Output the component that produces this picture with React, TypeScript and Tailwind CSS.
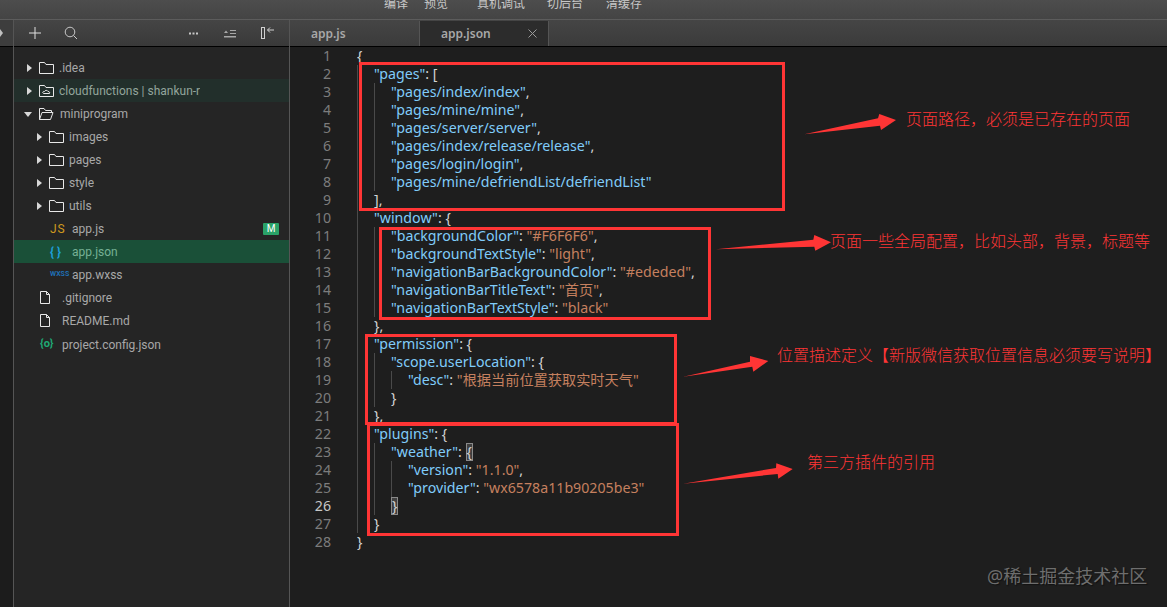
import React from "react";

type T = [string, string];
const K = "text-[#80ccfa]";
const P = "text-[#d4d4d4]";
const S = "text-[#c5805f]";
const lines: [number, T[]][] = [
  [0, [["{", P]]],
  [1, [['"pages"', K], [": [", P]]],
  [2, [['"pages/index/index"', K], [",", P]]],
  [2, [['"pages/mine/mine"', K], [",", P]]],
  [2, [['"pages/server/server"', K], [",", P]]],
  [2, [['"pages/index/release/release"', K], [",", P]]],
  [2, [['"pages/login/login"', K], [",", P]]],
  [2, [['"pages/mine/defriendList/defriendList"', K]]],
  [1, [["],", P]]],
  [1, [['"window"', K], [": {", P]]],
  [2, [['"backgroundColor"', K], [": ", P], ['"#F6F6F6"', S], [",", P]]],
  [2, [['"backgroundTextStyle"', K], [": ", P], ['"light"', S], [",", P]]],
  [2, [['"navigationBarBackgroundColor"', K], [": ", P], ['"#ededed"', S], [",", P]]],
  [2, [['"navigationBarTitleText"', K], [": ", P], ['"首页"', S], [",", P]]],
  [2, [['"navigationBarTextStyle"', K], [": ", P], ['"black"', S]]],
  [1, [["},", P]]],
  [1, [['"permission"', K], [": {", P]]],
  [2, [['"scope.userLocation"', K], [": {", P]]],
  [3, [['"desc"', K], [": ", P], ['"根据当前位置获取实时天气"', S]]],
  [2, [["}", P]]],
  [1, [["},", P]]],
  [1, [['"plugins"', K], [": {", P]]],
  [2, [['"weather"', K], [": ", P], ["{", "B"]]],
  [3, [['"version"', K], [": ", P], ['"1.1.0"', S], [",", P]]],
  [3, [['"provider"', K], [": ", P], ['"wx6578a11b90205be3"', S]]],
  [2, [["}", "B"]]],
  [1, [["}", P]]],
  [0, [["}", P]]],
];

const Folder = ({ open, cloud }: { open?: boolean; cloud?: boolean }) => (
  <svg width="15" height="12" viewBox="0 0 15 12" fill="none" stroke="#e8e8e8" strokeWidth="1">
    {open ? (
      <path d="M.5 11.5V.5h4.5l1.5 2h6v2M.5 11.5l2.5-7h11l-2.5 7z" />
    ) : (
      <path d="M.5 11.5V.5h5l1.5 2h7.5v9z" />
    )}
    {cloud && <path d="M4.5 8.5h6M4.5 8.5c-1.5-1 -.5-2.500 1-2 .5-1.500 3-1.500 3.500 0 1.500-.2 2 1.200 1.500 2" />}
  </svg>
);
const FileIcon = () => (
  <svg width="10" height="13" viewBox="0 0 10 13" fill="none" stroke="#e8e8e8" strokeWidth="1">
    <path d="M.5.5h6l3 3v9h-9zM6.500.5v3h3" />
  </svg>
);
const Caret = ({ open }: { open?: boolean }) => (
  <svg width="8" height="8" viewBox="0 0 8 8" fill="#d8d8d8">
    {open ? <path d="M0 2h8L4 7z" /> : <path d="M2 0l5 4-5 4z" />}
  </svg>
);

type Row = { label: string; pl: number; kind: string; bg?: string; tc?: string; badge?: boolean; extra?: string };
const rows: Row[] = [
  { label: ".idea", pl: 11, kind: "folder" },
  { label: "cloudfunctions | shankun-r", pl: 11, kind: "cloud", bg: "bg-[#222f2b]", tc: "text-[#93a59c]" },
  { label: "miniprogram", pl: 10, kind: "open" },
  { label: "images", pl: 21, kind: "folder" },
  { label: "pages", pl: 21, kind: "folder" },
  { label: "style", pl: 21, kind: "folder" },
  { label: "utils", pl: 21, kind: "folder" },
  { label: "app.js", pl: 36, kind: "js", badge: true },
  { label: "app.json", pl: 36, kind: "json", bg: "bg-[#1a5038]", tc: "text-[#76b095]" },
  { label: "app.wxss", pl: 36, kind: "wxss" },
  { label: ".gitignore", pl: 26, kind: "file" },
  { label: "README.md", pl: 26, kind: "file" },
  { label: "project.config.json", pl: 26, kind: "cfg", extra: "mt-[1px]" },
];

const RowIcon = ({ kind }: { kind: string }) => {
  if (kind === "js") return <span className="w-[22px] text-[12px] tracking-[1px] text-[#d19a1e]">JS</span>;
  if (kind === "json") return <span className="w-[22px] text-[12px] font-bold tracking-[3px] text-[#1e9fd8]">{"{}"}</span>;
  if (kind === "wxss") return <span className="w-[22px] text-[7px] font-bold text-[#1f6fb5]">WXSS</span>;
  if (kind === "cfg") return <span className="w-[22px] text-[11px] font-bold text-[#1faa75]">{"{o}"}</span>;
  if (kind === "file") return <span className="flex w-[22px] items-center"><FileIcon /></span>;
  const open = kind === "open";
  return (
    <>
      <span className={`flex items-center ${open ? "w-[15px]" : "w-[14px]"}`}><Caret open={open} /></span>
      <span className={`flex items-center ${open ? "w-[21px]" : "w-[20px]"}`}><Folder open={open} cloud={kind === "cloud"} /></span>
    </>
  );
};

const boxes = [
  "left-[359px] top-[62px] w-[426px] h-[149px]",
  "left-[379px] top-[227px] w-[332px] h-[93px]",
  "left-[365px] top-[334px] w-[312px] h-[91px]",
  "left-[367px] top-[423px] w-[312px] h-[113px]",
];
const arrows = [
  "804.3,134.3 878,118.3 879.3,114 896,120 881,130 880,125.7",
  "716,249.3 813.3,239.7 814.3,235 831,242.3 815.3,250.7 814.3,246.700",
  "683.3,376.7 750,361.7 750,356 768.3,361 753.3,371.7 752.3,366.7",
  "683.3,483.7 776,468 776.3,463.3 792.7,469 778.3,478.7 777.7,474",
];
const notes = [
  ["页面路径，必须是已存在的页面", "left-[906px] top-[107px]"],
  ["页面一些全局配置，比如头部，背景，标题等", "left-[830px] top-[229px]"],
  ["位置描述定义【新版微信获取位置信息必须要写说明】", "left-[777px] top-[343px]"],
  ["第三方插件的引用", "left-[807px] top-[450px]"],
];

export default function App() {
  return (
    <div className="relative flex h-[607px] w-[1167px] flex-col overflow-hidden bg-[#1e1e1e] font-['Noto_Sans','Noto_Sans_CJK_SC',sans-serif]">
      <header className="flex h-[20px] shrink-0 items-start overflow-hidden border-b border-[#5c5c5c] bg-gradient-to-b from-[#4d4d4d] to-[#444444] text-[12px] leading-[16px] text-[#c8c8c8]">
        <div className="-mt-[4px] ml-[384px] flex">
          <span className="w-[40px]">编译</span>
          <span className="w-[53px]">预览</span>
          <span className="w-[70px]">真机调试</span>
          <span className="w-[59px]">切后台</span>
          <span>清缓存</span>
        </div>
      </header>
      <div className="flex min-h-0 flex-1">
        <aside className="flex w-[13px] shrink-0 flex-col">
          <div className="flex h-[27px] items-center justify-end border-b border-black bg-[#3d3d3d] pr-[10px] text-[10px] text-[#aaaaaa]">
            <svg width="3" height="8" viewBox="0 0 3 8" fill="#c0c0c0"><path d="M0 0l3 4-3 4z" /></svg>
          </div>
          <div className="flex-1 bg-[#1c1c1c]" />
        </aside>
        <nav className="flex w-[277px] shrink-0 flex-col border-x border-[#555555] bg-[#252525]">
          <div className="flex h-[27px] shrink-0 items-center border-b border-black bg-gradient-to-b from-[#454545] to-[#393939] pl-[15px]">
            <svg width="12" height="12" viewBox="0 0 12 12" stroke="#e0e0e0" strokeWidth="1"><path d="M6 0v12M0 6h12" /></svg>
            <svg className="ml-[23px]" width="14" height="14" viewBox="0 0 14 14" fill="none" stroke="#c8c8c8" strokeWidth="1"><circle cx="6" cy="6" r="4.800" /><path d="M9.500 9.500l3.500 3.500" /></svg>
            <svg className="ml-[111px]" width="9" height="3" viewBox="0 0 9 3" fill="#c8c8c8"><rect width="2" height="2" y=".5" /><rect x="3.500" width="2" height="2" y=".5" /><rect x="7" width="2" height="2" y=".5" /></svg>
            <svg className="ml-[26px]" width="12" height="9" viewBox="0 0 12 9" fill="#a8a8a8"><path d="M0 4l2-2.500L4 4zM6 1h6v1H6zM6 4h6v1H6zM0 7h12v1.500H0z" /></svg>
            <svg className="ml-[25px]" width="14" height="12" viewBox="0 0 14 12" fill="none" stroke="#d0d0d0"><rect x=".5" y=".5" width="3" height="11" /><path d="M13 3H6.500M9 .5L6.500 3 9 5.500" /></svg>
          </div>
          <ul className="flex flex-col pt-[9px] font-['Roboto','Noto_Sans',sans-serif] text-[12px] text-[#a8a8a8]">
            {rows.map((r) => (
              <li key={r.label} className={`flex h-[23px] shrink-0 items-center ${r.bg ?? ""} ${r.tc ?? ""} ${r.extra ?? ""}`} style={{ paddingLeft: r.pl }}>
                <RowIcon kind={r.kind} />
                <span className="truncate">{r.label}</span>
                {r.badge && (
                  <span className="ml-auto mr-[10px] flex h-[12px] w-[16px] items-center justify-center rounded-[1px] bg-[#2aa268] text-[10px] text-white">M</span>
                )}
              </li>
            ))}
          </ul>
        </nav>
        <main className="flex min-w-0 flex-1 flex-col">
          <div className="flex h-[27px] shrink-0 border-b border-black bg-gradient-to-b from-[#454545] to-[#3b3b3b] pt-[1px] text-[12px] font-semibold text-[#a8a8a8]">
            <div className="flex w-[130px] items-center border-r border-[#555555] pl-[21px]">app.js</div>
            <div className="flex w-[129px] items-center border-r border-[#555555] bg-[#2c2c2c] pl-[21px]">
              <span>app.json</span>
              <svg className="ml-auto mr-[11px]" width="9" height="9" viewBox="0 0 9 9" stroke="#9a9a9a"><path d="M.5.5l8 8M8.500.5l-8 8" /></svg>
            </div>
          </div>
          <div className="text-[14.2px] leading-[18px]">
            {lines.map(([d, toks], i) => (
              <div key={i} className="flex h-[18px] whitespace-pre">
                <span className={`w-[41px] shrink-0 text-right ${i === 25 ? "text-[#c6c6c6]" : "text-[#7c7c7c]"}`}>{i + 1}</span>
                <span className="w-[26px] shrink-0" />
                {Array.from({ length: d }).map((_, g) => (
                  <span key={g} className="w-[17px] shrink-0 border-l border-[#4a4a4a]" />
                ))}
                {toks.map(([t, c], j) =>
                  c === "B" ? (
                    <span key={j} className="box-border border border-[#8a8a8a] bg-[#3f3f3f] leading-[16px] text-[#d4d4d4]">{t}</span>
                  ) : (
                    <span key={j} className={c}>{t}</span>
                  )
                )}
              </div>
            ))}
          </div>
        </main>
      </div>

      {boxes.map((b) => (
        <div key={b} className={`absolute border-[3px] border-[#ff3535] ${b}`} />
      ))}
      <svg className="pointer-events-none absolute left-0 top-0" width="1167" height="607" fill="#ff3535">
        {arrows.map((a) => (
          <polygon key={a} points={a} />
        ))}
      </svg>
      {notes.map(([t, c]) => (
        <div key={t} className={`absolute whitespace-nowrap text-[16px] font-light leading-[24px] text-[#ff3535] ${c}`}>{t}</div>
      ))}
      <div className="absolute left-[987px] top-[564px] whitespace-nowrap text-[18px] leading-[24px] text-[#6e6e6e] [text-shadow:1px_1px_1px_#111111]">@稀土掘金技术社区</div>
    </div>
  );
}
